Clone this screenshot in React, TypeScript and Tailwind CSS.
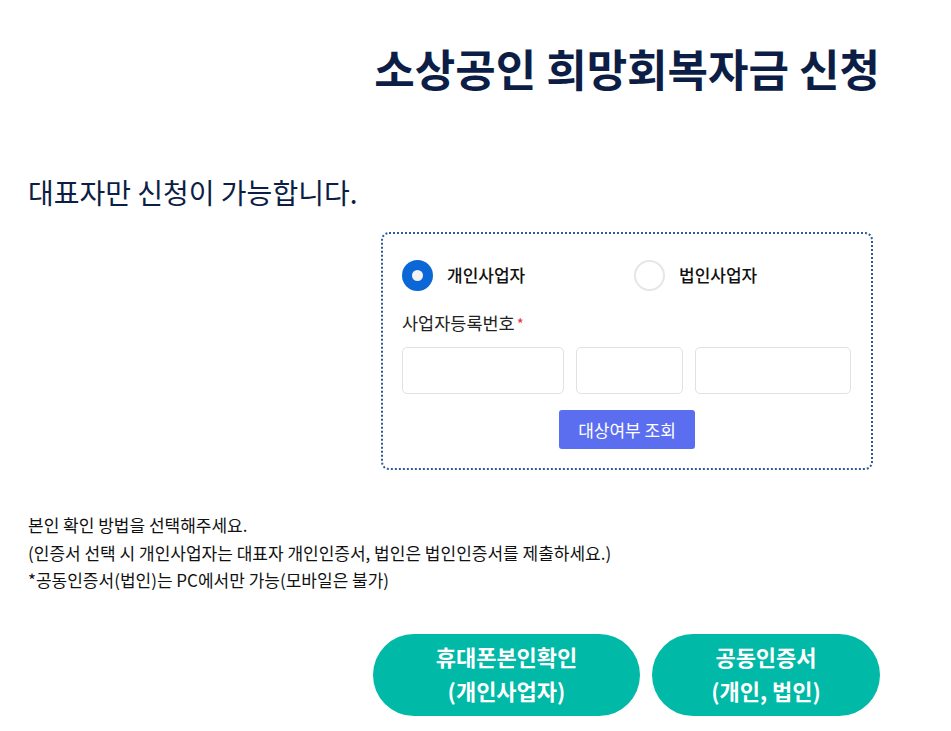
import React from "react";

const font = { fontFamily: '"Noto Sans CJK KR", "Noto Sans", sans-serif' };

export default function App() {
  return (
    <div className="w-[951px] h-[731px] bg-white overflow-hidden" style={font}>
      <div className="w-[852px] ml-[28px] flex flex-col">
        <h1 className="mt-[38px] self-end text-[44px] leading-[60px] font-bold text-[#0c1e45]">
          소상공인 희망회복자금 신청
        </h1>
        <p className="mt-[76px] text-[28px] leading-[36px] text-[#0c1e45]">
          대표자만 신청이 가능합니다.
        </p>
        <div className="mt-[22px] ml-[353px] w-[492px] h-[238px] rounded-[8px] border-2 border-dotted border-[#2e5d96] pt-[25px] pl-[19px] flex flex-col">
          <div className="flex items-center h-[32px]">
            <div className="flex items-center w-[232px]">
              <span className="w-[31px] h-[31px] rounded-full bg-[#0b67d6] flex items-center justify-center">
                <span className="w-[11px] h-[11px] rounded-full bg-[#f2f2f2]" />
              </span>
              <span className="ml-[14px] text-[17px] font-medium text-[#111]">개인사업자</span>
            </div>
            <div className="flex items-center">
              <span className="w-[31px] h-[31px] rounded-full border-2 border-[#e6e6e6] bg-white" />
              <span className="ml-[14px] text-[17px] font-medium text-[#111]">법인사업자</span>
            </div>
          </div>
          <div className="mt-[20px] text-[17.5px] leading-[24px] text-[#222]">
            사업자등록번호<span className="text-[#e53935] ml-[2px] text-[15px]">*</span>
          </div>
          <div className="mt-[11px] flex gap-[12px]">
            <input className="w-[162px] h-[47px] rounded-[5px] border border-[#e2e2e2] bg-white" />
            <input className="w-[107px] h-[47px] rounded-[5px] border border-[#e2e2e2] bg-white" />
            <input className="w-[156px] h-[47px] rounded-[5px] border border-[#e2e2e2] bg-white" />
          </div>
          <div className="mt-[16px] flex">
            <button className="ml-[157px] w-[136px] h-[39px] rounded-[3px] bg-[#5b6ef0] text-white text-[17px]">
              대상여부 조회
            </button>
          </div>
        </div>
        <div className="mt-[41px] text-[17px] leading-[27.5px] text-[#111]">
          <p>본인 확인 방법을 선택해주세요.</p>
          <p>(인증서 선택 시 개인사업자는 대표자 개인인증서, 법인은 법인인증서를 제출하세요.)</p>
          <p>*공동인증서(법인)는 PC에서만 가능(모바일은 불가)</p>
        </div>
        <div className="mt-[40px] self-end flex gap-[12px]">
          <button className="w-[267px] h-[82px] pb-[4px] rounded-full bg-[#00b9a6] text-white text-[22px] leading-[34px] font-bold">
            휴대폰본인확인<br />(개인사업자)
          </button>
          <button className="w-[228px] h-[82px] pb-[4px] rounded-full bg-[#00b9a6] text-white text-[22px] leading-[34px] font-bold">
            공동인증서<br />(개인, 법인)
          </button>
        </div>
      </div>
    </div>
  );
}
